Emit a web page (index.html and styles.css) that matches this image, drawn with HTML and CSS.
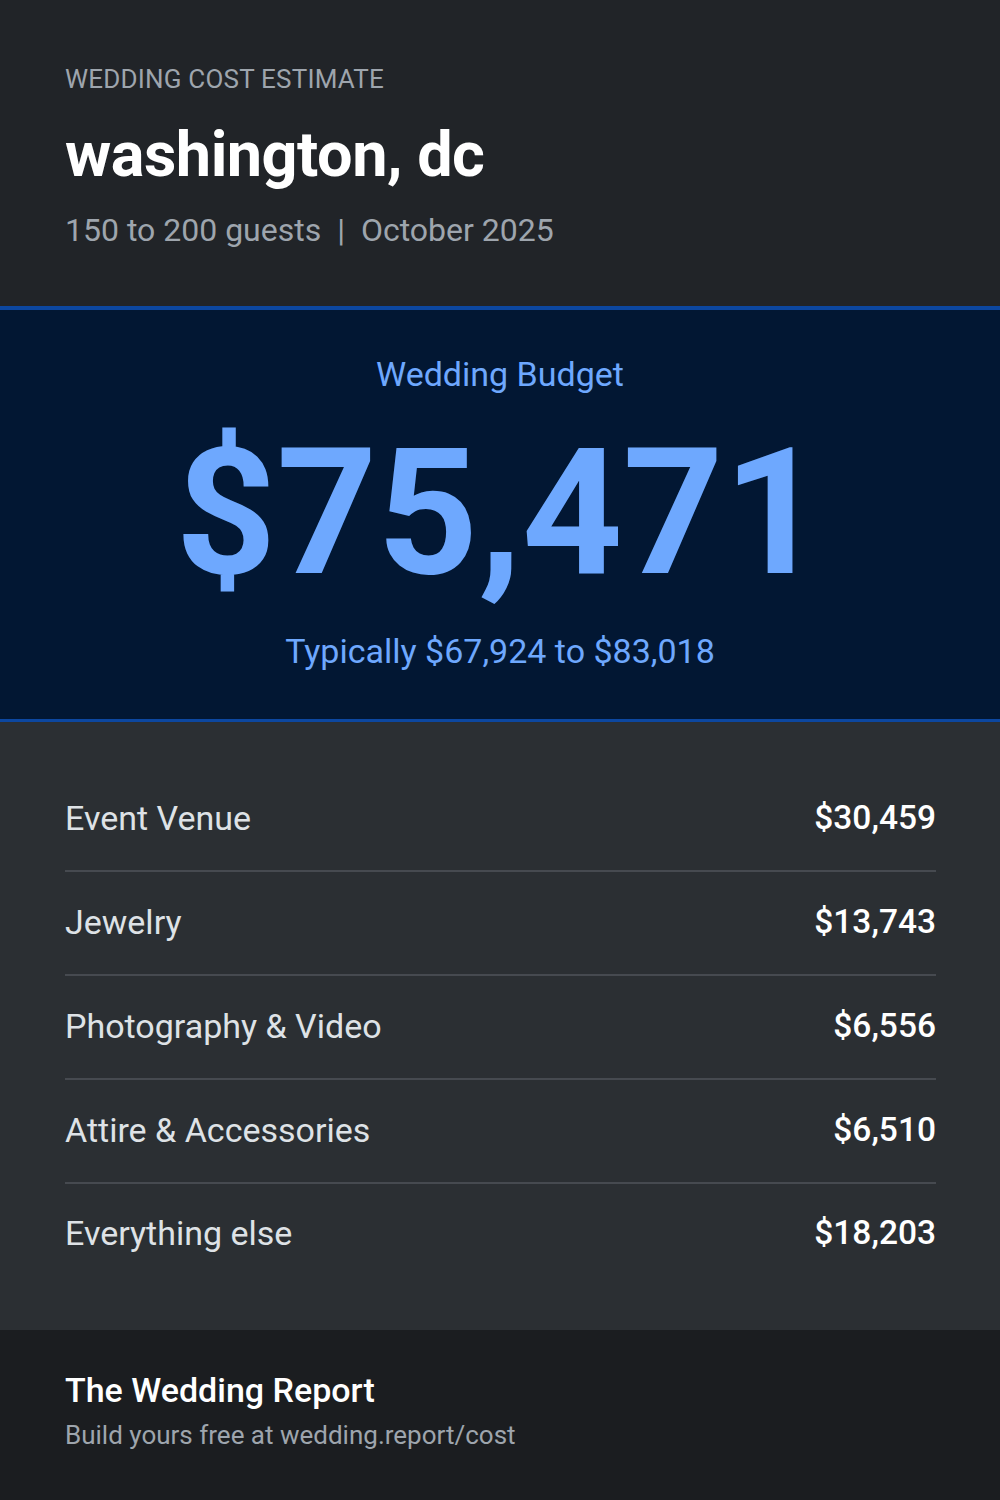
FILE: index.html
```html
<!DOCTYPE html>
<html>
<head>
<meta charset="utf-8">
<link rel="stylesheet" href="styles.css">
</head>
<body>
<div class="card">
  <header class="head">
    <div class="eyebrow">WEDDING COST ESTIMATE</div>
    <h1 class="city">washington, dc</h1>
    <div class="meta">150 to 200 guests <span class="sep">|</span> October 2025</div>
  </header>
  <section class="budget">
    <div class="budget-label">Wedding Budget</div>
    <div class="budget-total">$75,471</div>
    <div class="budget-range">Typically $67,924 to $83,018</div>
  </section>
  <section class="lines">
    <div class="line"><span class="line-name">Event Venue</span><span class="line-val">$30,459</span></div>
    <div class="line"><span class="line-name">Jewelry</span><span class="line-val">$13,743</span></div>
    <div class="line"><span class="line-name">Photography &amp; Video</span><span class="line-val">$6,556</span></div>
    <div class="line"><span class="line-name">Attire &amp; Accessories</span><span class="line-val">$6,510</span></div>
    <div class="line"><span class="line-name">Everything else</span><span class="line-val">$18,203</span></div>
  </section>
  <footer class="foot">
    <div class="brand">The Wedding Report</div>
    <div class="cta">Build yours free at wedding.report/cost</div>
  </footer>
</div>
</body>
</html>
```
FILE: styles.css
```css
* { box-sizing: border-box; }
html, body { margin: 0; padding: 0; }
body {
  width: 1000px;
  height: 1500px;
  background: #1b1d20;
  font-family: Roboto, "Liberation Sans", sans-serif;
}
.card {
  display: flex;
  flex-direction: column;
  height: 1500px;
}
.head {
  background: #212428;
  padding: 64px 65px 0;
  height: 306px;
}
.eyebrow {
  font-size: 26px;
  line-height: 30px;
  color: #9ea5ad;
  font-weight: 400;
  letter-spacing: 0.2px;
}
.city {
  margin: 27px 0 0;
  font-size: 63px;
  line-height: 68px;
  font-weight: 700;
  color: #ffffff;
  letter-spacing: -0.5px;
}
.meta {
  margin-top: 23px;
  font-size: 32px;
  line-height: 36px;
  color: #9ea5ad;
}
.sep { padding: 0 8px; }
.budget {
  background: #021733;
  border-top: 4px solid #0c47a0;
  border-bottom: 3px solid #0c47a0;
  height: 416px;
  display: flex;
  flex-direction: column;
  align-items: center;
  padding-top: 44px;
  color: #6ea8fe;
}
.budget-label {
  font-size: 34px;
  line-height: 40px;
}
.budget-total {
  font-size: 176px;
  line-height: 200px;
  font-weight: 700;
  margin-top: 19px;
}
.budget-range {
  margin-top: 18px;
  font-size: 34px;
  line-height: 40px;
}
.lines {
  background: #2b2f33;
  padding: 46px 64px 46px 65px;
  flex: 0 0 auto;
}
.line {
  display: flex;
  justify-content: space-between;
  align-items: center;
  height: 104px;
  border-bottom: 2px solid #464a50;
  padding-bottom: 3px;
}
.line:last-child { border-bottom: none; height: 100px; }
.line-name {
  font-size: 34px;
  color: #dee2e6;
}
.line-val {
  font-size: 33.5px;
  font-weight: 500;
  color: #ffffff;
}
.foot {
  flex: 1;
  background: #1b1d20;
  padding: 40px 65px;
}
.brand {
  font-size: 34px;
  line-height: 40px;
  font-weight: 500;
  color: #ffffff;
}
.cta {
  margin-top: 9px;
  font-size: 26px;
  line-height: 32px;
  color: #9ea5ad;
}
```
